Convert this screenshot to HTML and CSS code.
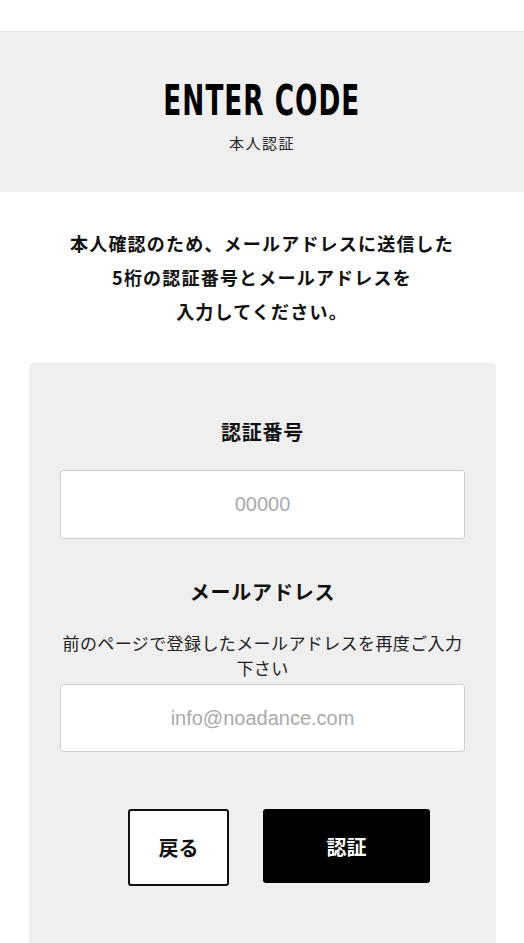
FILE: index.html
```html
<!DOCTYPE html>
<html lang="ja">
<head>
<meta charset="utf-8">
<title>ENTER CODE</title>
<link rel="stylesheet" href="styles.css">
</head>
<body>
<div class="topbar"></div>
<section class="hero">
  <h1 class="hero-title"><span class="hero-title-text">ENTER CODE</span></h1>
  <p class="hero-sub">本人認証</p>
</section>
<p class="lead">本人確認のため、メールアドレスに送信した<br>5桁の認証番号とメールアドレスを<br>入力してください。</p>
<form class="card">
  <label class="field-label" for="code">認証番号</label>
  <input class="field-input" id="code" type="text" placeholder="00000">
  <label class="field-label field-label-mail" for="mail">メールアドレス</label>
  <p class="field-note">前のページで登録したメールアドレスを再度ご入力下さい</p>
  <input class="field-input field-input-mail" id="mail" type="email" placeholder="info@noadance.com">
  <div class="actions">
    <button type="button" class="btn btn-back">戻る</button>
    <button type="button" class="btn btn-submit">認証</button>
  </div>
</form>
</body>
</html>
```
FILE: styles.css
```css
* { box-sizing: border-box; }
html, body { margin: 0; padding: 0; background: #fff; }
body {
  font-family: "Noto Sans CJK JP", "Noto Sans", sans-serif;
  color: #111;
  width: 524px;
  overflow: hidden;
}
.topbar {
  height: 32px;
  background: #fff;
  border-bottom: 1px solid #e8e8e8;
}
.hero {
  height: 160px;
  background: #efefef;
  text-align: center;
  padding-top: 42px;
}
.hero-title {
  margin: 0;
  height: 52px;
  line-height: 52px;
  font-family: "DejaVu Sans Condensed", "DejaVu Sans", sans-serif;
  font-stretch: condensed;
  font-weight: bold;
  font-size: 43px;
  color: #000;
}
.hero-title-text {
  display: inline-block;
  transform: scaleX(0.68);
  letter-spacing: 1.5px;
}
.hero-sub {
  margin: 6px 0 0;
  font-size: 15px;
  letter-spacing: 1.5px;
  line-height: 22px;
  color: #222;
}
.lead {
  margin: 34px 0 0;
  text-align: center;
  font-weight: bold;
  font-size: 18px;
  letter-spacing: 1.2px;
  line-height: 34px;
  color: #111;
}
.card {
  display: flex;
  flex-direction: column;
  margin: 35px 28px 0 29px;
  background: #efefef;
  border-radius: 4px;
  padding: 54px 31px 80px;
}
.field-label {
  display: block;
  text-align: center;
  font-weight: bold;
  font-size: 20px;
  letter-spacing: 0.8px;
  line-height: 30px;
  color: #111;
}
.field-label-mail { margin-top: 38px; }
.field-input {
  display: block;
  width: 100%;
  height: 69px;
  margin-top: 23px;
  background: #fff;
  border: 1px solid #cfcfcf;
  border-radius: 3px;
  text-align: center;
  font-family: "Liberation Sans", Arial, sans-serif;
  font-size: 20px;
  color: #111;
  outline: none;
}
.field-input::placeholder { color: #aaaaaa; }
.field-input-mail { margin-top: 4px; height: 68px; }
.field-note {
  margin: 23px 0 0;
  text-align: center;
  font-size: 17px;
  letter-spacing: 0.4px;
  line-height: 25px;
  color: #222;
}
.actions {
  display: flex;
  justify-content: center;
  align-items: flex-start;
  gap: 34px;
  margin-top: 57px;
  padding-left: 33px;
}
.btn {
  font-family: "Noto Sans CJK JP", sans-serif;
  font-weight: bold;
  font-size: 20px;
  border-radius: 3px;
  cursor: pointer;
  padding: 0;
}
.btn-back {
  width: 101px;
  height: 77px;
  background: #fff;
  color: #111;
  border: 2px solid #111;
}
.btn-submit {
  width: 167px;
  height: 74px;
  background: #000;
  color: #fff;
  border: none;
}
```
